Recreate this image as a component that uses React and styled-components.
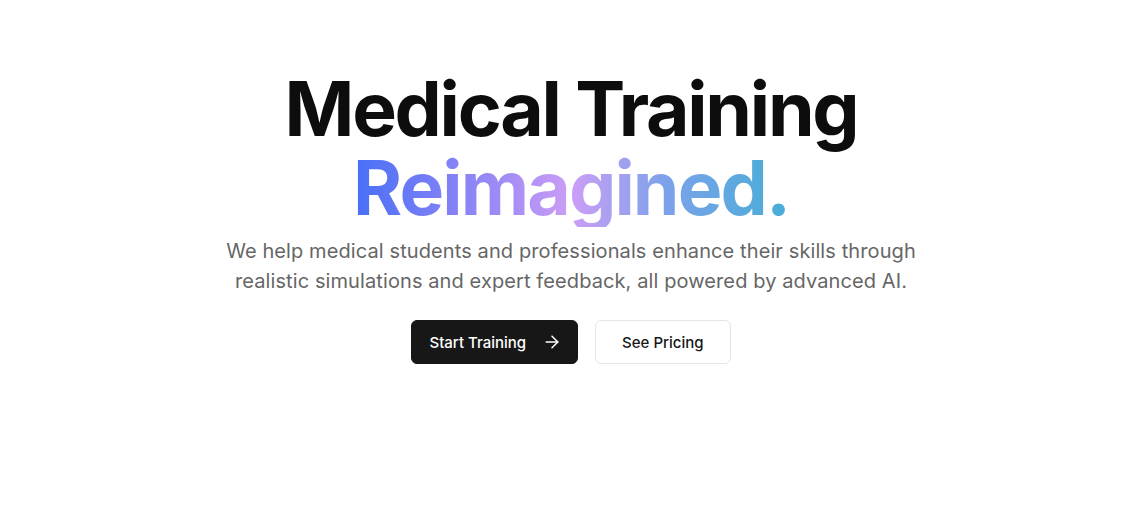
import styled, { createGlobalStyle } from "styled-components";

const GlobalStyle = createGlobalStyle`
  body {
    margin: 0;
    background: #fff;
    font-family: Inter, "Noto Sans", sans-serif;
    -webkit-font-smoothing: antialiased;
  }
`;

const Hero = styled.section`
  display: flex;
  flex-direction: column;
  align-items: center;
  text-align: center;
  padding: 69px 0 0 18px;
`;

const Title = styled.h1`
  margin: 0;
  font-size: 75px;
  line-height: 79px;
  font-weight: 700;
  letter-spacing: -0.03em;
  color: #0d0d0d;
`;

const Gradient = styled.span`
  display: inline-block;
  letter-spacing: -0.025em;
  background: linear-gradient(90deg, #476ff6 0%, #a38cf5 35%, #cb9ef6 50%, #7ba2ea 72%, #46aed6 100%);
  -webkit-background-clip: text;
  background-clip: text;
  color: transparent;
`;

const Lead = styled.p`
  margin: 9px 0 0;
  max-width: 720px;
  font-size: 20px;
  line-height: 30px;
  letter-spacing: 0.1px;
  color: #666666;
`;

const Actions = styled.div`
  display: flex;
  gap: 17px;
  margin-top: 24px;
`;

const Button = styled.button`
  display: inline-flex;
  align-items: center;
  gap: 16px;
  height: 44px;
  padding: ${(p) => (p.$primary ? "0 15px 0 17px" : "0 26px")};
  border-radius: 6px;
  font-family: Inter, sans-serif;
  font-size: 15px;
  font-weight: 500;
  cursor: pointer;
  border: 1px solid ${(p) => (p.$primary ? "#171717" : "#e5e5e5")};
  background: ${(p) => (p.$primary ? "#171717" : "#fff")};
  color: ${(p) => (p.$primary ? "#fff" : "#171717")};
`;

const Arrow = () => (
  <svg width="20" height="20" viewBox="0 0 24 24" fill="none" stroke="currentColor" strokeWidth="1.8" strokeLinecap="round" strokeLinejoin="round">
    <path d="M5 12h14" />
    <path d="m12 5 7 7-7 7" />
  </svg>
);

export default function App() {
  return (
    <>
      <GlobalStyle />
      <Hero>
        <Title>
          Medical Training
          <br />
          <Gradient>Reimagined.</Gradient>
        </Title>
        <Lead>
          We help medical students and professionals enhance their skills through realistic simulations and expert feedback, all powered by advanced AI.
        </Lead>
        <Actions>
          <Button $primary>
            Start Training <Arrow />
          </Button>
          <Button>See Pricing</Button>
        </Actions>
      </Hero>
    </>
  );
}
